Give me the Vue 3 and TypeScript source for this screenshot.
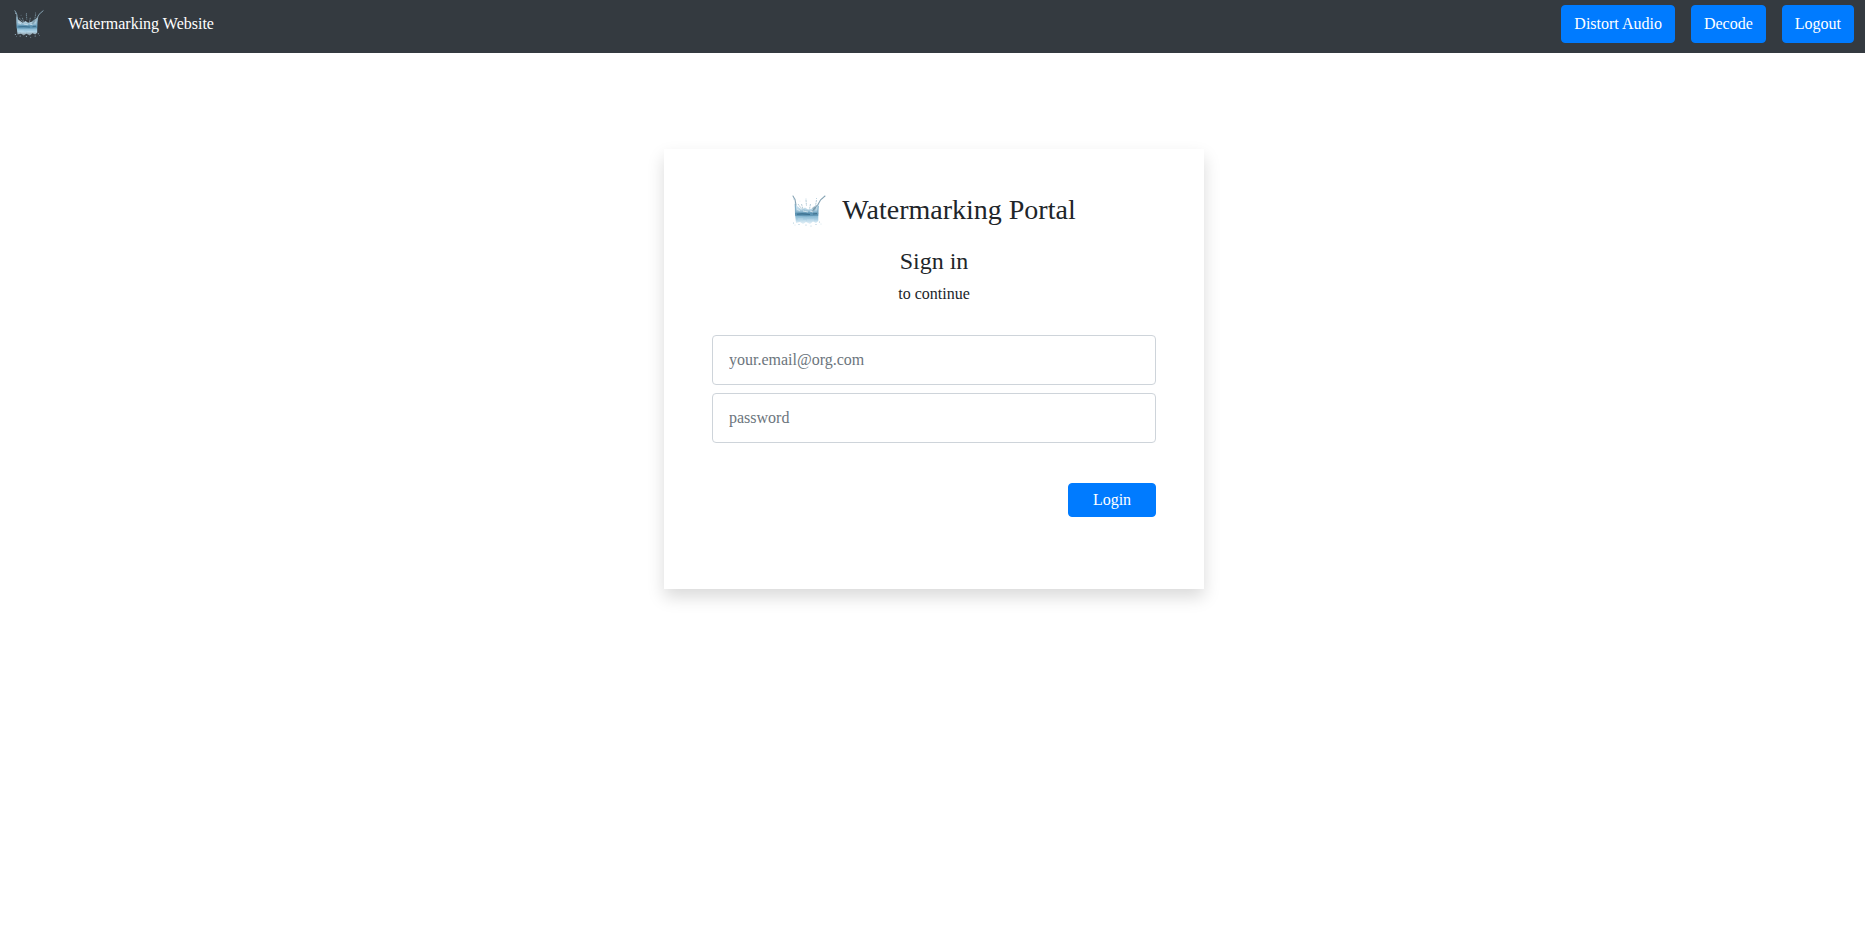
<script setup lang="ts">
import { ref } from 'vue'

const navActions: string[] = ['Distort Audio', 'Decode', 'Logout']
const email = ref('')
const password = ref('')
</script>

<template>
  <svg class="defs" aria-hidden="true">
    <defs>
      <linearGradient id="water" x1="0" y1="0" x2="0" y2="1">
        <stop offset="0" stop-color="#cfe2ee" stop-opacity="0.65" />
        <stop offset="0.35" stop-color="#b9d7e7" stop-opacity="0.95" />
        <stop offset="0.52" stop-color="#74a6c2" />
        <stop offset="0.64" stop-color="#85b5cf" />
        <stop offset="0.8" stop-color="#a9cfe4" />
        <stop offset="1" stop-color="#cde3f0" stop-opacity="0.5" />
      </linearGradient>
      <symbol id="splash" viewBox="0 0 34 32">
        <path d="M2.5 6 L4.5 10.5 L7 12.5 L10 14.5 L13 12.5 L16 14.5 L20 13.5 L23 11.5 L27.5 8 L26.3 14 L26.3 26 L24 28 L21 26.5 L18 29 L14 27 L11 29 L8 27 L4 28 L3 19 Z" fill="url(#water)" />
        <path d="M3 17.8 Q14 17 26.3 17.8 L26.3 20.8 Q14 21.5 3 20.8 Z" fill="#4d86a8" opacity="0.65" />
        <path d="M5 19.2 Q11 18.5 18 19.5" fill="none" stroke="#2f6382" stroke-width="1.1" opacity="0.75" />
        <path d="M21 19 L25.5 18.5" stroke="#35637d" stroke-width="1.2" opacity="0.7" />
        <path d="M3.3 9 L3.8 18 M26.2 11 L25.7 19" stroke="#76a6c1" stroke-width="1.1" fill="none" opacity="0.85" />
        <path d="M1 1 L3 4.5 L4 10 M33 1 L28.5 5 L26 9.5 L22 14 L20 17" fill="none" stroke="#86a3b4" stroke-width="1.1" stroke-linecap="round" stroke-dasharray="2.5 0.5" />
        <path d="M14 5 L14.5 11 M9.5 9 L11 14 M24.5 5 L23.5 11 M18.5 9 L17.5 14 M6 9 L9 13 L13 15.5" fill="none" stroke="#93b3c5" stroke-width="0.8" opacity="0.85" stroke-dasharray="2 0.7" />
        <path d="M20 13 L22.5 11 L24.5 13 L22 16 Z" fill="#68899b" opacity="0.5" />
        <path d="M5 14 L8 16 M11 16 L16 17 M18 16 L21 17" stroke="#edf6fb" stroke-width="0.9" opacity="0.7" />
        <g fill="#a9c6d7">
          <circle cx="2" cy="4" r="0.6" /><circle cx="14" cy="4" r="0.5" />
          <circle cx="24.5" cy="3.5" r="0.5" /><circle cx="8" cy="6" r="0.35" />
          <circle cx="1.5" cy="28" r="0.6" /><circle cx="3" cy="30" r="0.4" />
          <circle cx="7" cy="29.5" r="0.6" /><circle cx="14" cy="30" r="0.6" />
          <circle cx="19" cy="31" r="0.5" /><circle cx="24" cy="29.5" r="0.6" />
          <circle cx="27.5" cy="27" r="0.6" /><circle cx="29" cy="29" r="0.4" />
        </g>
        <path d="M6 24 H11 M15 25 H22 M8 26 H14" stroke="#e0eff8" stroke-width="0.8" opacity="0.45" />
      </symbol>
    </defs>
  </svg>

  <div class="page">
    <nav class="navbar">
      <a class="brand">
        <svg class="brand-logo"><use href="#splash" /></svg>
        <span>Watermarking Website</span>
      </a>
      <div class="actions">
        <button v-for="label in navActions" :key="label" class="btn" type="button">{{ label }}</button>
      </div>
    </nav>

    <main>
      <form class="card" @submit.prevent>
        <div class="heading">
          <svg class="heading-logo"><use href="#splash" /></svg>
          <h3>Watermarking Portal</h3>
        </div>
        <h4>Sign in</h4>
        <p>to continue</p>
        <input v-model="email" type="email" placeholder="your.email@org.com" />
        <input v-model="password" type="password" placeholder="password" />
        <button class="btn login" type="submit">Login</button>
      </form>
    </main>
  </div>
</template>

<style>
body {
  margin: 0;
  background: #fff;
}
</style>

<style scoped>
* {
  box-sizing: border-box;
}
.defs {
  position: absolute;
  width: 0;
  height: 0;
}
.page {
  min-height: 949px;
  font-family: "Liberation Serif", "Times New Roman", serif;
  font-size: 16px;
  line-height: 24px;
  color: #212529;
}
.navbar {
  display: flex;
  justify-content: space-between;
  align-items: flex-start;
  height: 53px;
  padding: 5px 11px 0 14px;
  background: #343a40;
}
.brand {
  display: flex;
  align-items: center;
  height: 38px;
  color: #fff;
}
.brand-logo {
  width: 30px;
  height: 32px;
  margin-right: 24px;
}
.actions {
  display: flex;
  gap: 16px;
}
.btn {
  height: 38px;
  padding: 0 12px;
  border: 1px solid #007bff;
  border-radius: 4px;
  background: #007bff;
  color: #fff;
  font: inherit;
  white-space: nowrap;
}
.card {
  display: flex;
  flex-direction: column;
  width: 540px;
  height: 440px;
  margin: 96px 0 0 664px;
  padding: 44px 48px 0;
  background: #fff;
  box-shadow: 0 8px 16px rgba(0, 0, 0, 0.15);
}
.heading {
  display: flex;
  justify-content: center;
  gap: 16px;
}
.heading-logo {
  width: 34px;
  height: 32px;
  margin-top: 2px;
}
h3,
h4,
p {
  margin: 0;
  font-weight: 400;
  text-align: center;
}
h3 {
  font-size: 28px;
  line-height: 34px;
}
h4 {
  margin-top: 20px;
  font-size: 24px;
  line-height: 29px;
}
p {
  margin: 6px 0 29px;
}
input {
  width: 444px;
  height: 50px;
  margin-bottom: 8px;
  padding: 0 16px;
  border: 1px solid #ced4da;
  border-radius: 4px;
  background: #fff;
  color: #495057;
  font: inherit;
  outline: none;
}
input::placeholder {
  color: #6c757d;
  opacity: 1;
}
.login {
  align-self: flex-end;
  width: 88px;
  height: 34px;
  margin-top: 32px;
}
</style>
